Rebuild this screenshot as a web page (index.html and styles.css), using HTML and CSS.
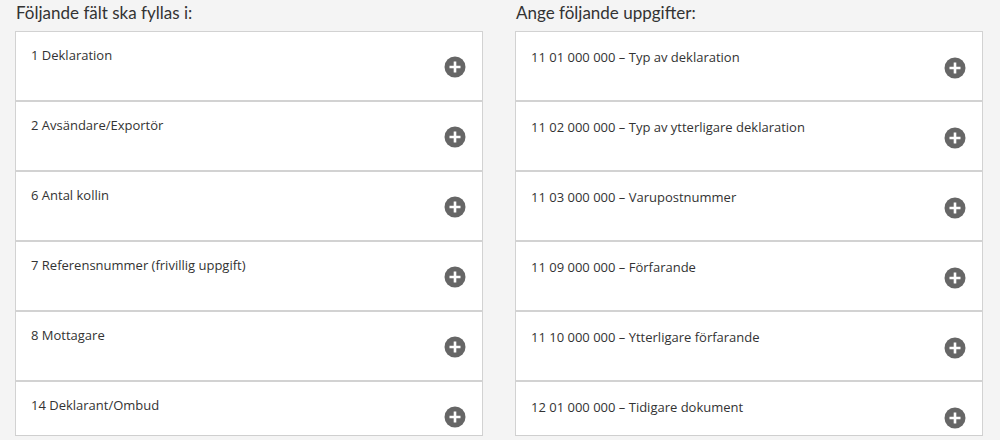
FILE: index.html
```html
<!DOCTYPE html>
<html lang="sv">
<head>
    <meta charset="UTF-8">
    <meta name="viewport" content="width=device-width, initial-scale=1.0">
    <title>Deklaration – fält och uppgifter</title>
    <link rel="stylesheet" href="styles.css">
</head>
<body>
    <div class="columns">
        <!-- Vänster kolumn: fält -->
        <section class="column">
            <h2 class="column-title">Följande fält ska fyllas i:</h2>
            <div class="list">
                <div class="row"><span class="row-label">1 Deklaration</span><button class="add-btn" aria-label="Lägg till"><svg viewBox="0 0 22 22"><circle cx="11" cy="11" r="10.5"/><path d="M11 5.5v11M5.5 11h11"/></svg></button></div>
                <div class="row"><span class="row-label">2 Avsändare/Exportör</span><button class="add-btn" aria-label="Lägg till"><svg viewBox="0 0 22 22"><circle cx="11" cy="11" r="10.5"/><path d="M11 5.5v11M5.5 11h11"/></svg></button></div>
                <div class="row"><span class="row-label">6 Antal kollin</span><button class="add-btn" aria-label="Lägg till"><svg viewBox="0 0 22 22"><circle cx="11" cy="11" r="10.5"/><path d="M11 5.5v11M5.5 11h11"/></svg></button></div>
                <div class="row"><span class="row-label">7 Referensnummer (frivillig uppgift)</span><button class="add-btn" aria-label="Lägg till"><svg viewBox="0 0 22 22"><circle cx="11" cy="11" r="10.5"/><path d="M11 5.5v11M5.5 11h11"/></svg></button></div>
                <div class="row"><span class="row-label">8 Mottagare</span><button class="add-btn" aria-label="Lägg till"><svg viewBox="0 0 22 22"><circle cx="11" cy="11" r="10.5"/><path d="M11 5.5v11M5.5 11h11"/></svg></button></div>
                <div class="row"><span class="row-label">14 Deklarant/Ombud</span><button class="add-btn" aria-label="Lägg till"><svg viewBox="0 0 22 22"><circle cx="11" cy="11" r="10.5"/><path d="M11 5.5v11M5.5 11h11"/></svg></button></div>
            </div>
        </section>

        <!-- Höger kolumn: uppgifter -->
        <section class="column column-data">
            <h2 class="column-title">Ange följande uppgifter:</h2>
            <div class="list">
                <div class="row"><span class="row-label">11 01 000 000 – Typ av deklaration</span><button class="add-btn" aria-label="Lägg till"><svg viewBox="0 0 22 22"><circle cx="11" cy="11" r="10.5"/><path d="M11 5.5v11M5.5 11h11"/></svg></button></div>
                <div class="row"><span class="row-label">11 02 000 000 – Typ av ytterligare deklaration</span><button class="add-btn" aria-label="Lägg till"><svg viewBox="0 0 22 22"><circle cx="11" cy="11" r="10.5"/><path d="M11 5.5v11M5.5 11h11"/></svg></button></div>
                <div class="row"><span class="row-label">11 03 000 000 – Varupostnummer</span><button class="add-btn" aria-label="Lägg till"><svg viewBox="0 0 22 22"><circle cx="11" cy="11" r="10.5"/><path d="M11 5.5v11M5.5 11h11"/></svg></button></div>
                <div class="row"><span class="row-label">11 09 000 000 – Förfarande</span><button class="add-btn" aria-label="Lägg till"><svg viewBox="0 0 22 22"><circle cx="11" cy="11" r="10.5"/><path d="M11 5.5v11M5.5 11h11"/></svg></button></div>
                <div class="row"><span class="row-label">11 10 000 000 – Ytterligare förfarande</span><button class="add-btn" aria-label="Lägg till"><svg viewBox="0 0 22 22"><circle cx="11" cy="11" r="10.5"/><path d="M11 5.5v11M5.5 11h11"/></svg></button></div>
                <div class="row"><span class="row-label">12 01 000 000 – Tidigare dokument</span><button class="add-btn" aria-label="Lägg till"><svg viewBox="0 0 22 22"><circle cx="11" cy="11" r="10.5"/><path d="M11 5.5v11M5.5 11h11"/></svg></button></div>
            </div>
        </section>
    </div>
</body>
</html>
```

FILE: styles.css
```css
/* Grundinställningar */
body {
    margin: 0;
    background: #f4f4f4;
    font-family: "Open Sans", "Liberation Sans", sans-serif;
    color: #333;
}

/* Två kolumner */
.columns {
    display: grid;
    grid-template-columns: 468px 468px;
    column-gap: 32px;
    padding-left: 15px;
}

.column-title {
    margin: 2px 0 7px 1px;
    font-family: Lato, "Open Sans", sans-serif;
    font-size: 17px;
    line-height: 22px;
    font-weight: 400;
    color: #333;
}

/* Listan med rader, klipps i nederkant */
.list {
    height: 404px;
    overflow: hidden;
    border-bottom: 1px solid #cfcfcf;
}

.row {
    box-sizing: border-box;
    height: 70px;
    display: flex;
    justify-content: space-between;
    background: #fff;
    border: 1px solid #d2d2d2;
    padding: 14px 16px 0 15px;
}

.column-data .row {
    padding-top: 16px;
}

.row-label {
    font-size: 13px;
    line-height: 18px;
}

/* Plusknapp */
.add-btn {
    width: 22px;
    height: 22px;
    margin-top: 10px;
    padding: 0;
    border: none;
    background: transparent;
    cursor: pointer;
}

.column-data .add-btn {
    margin-top: 9px;
}

.add-btn svg {
    display: block;
    width: 22px;
    height: 22px;
}

.add-btn circle {
    fill: #666;
}

.add-btn path {
    stroke: #fff;
    stroke-width: 2.6;
}
```
